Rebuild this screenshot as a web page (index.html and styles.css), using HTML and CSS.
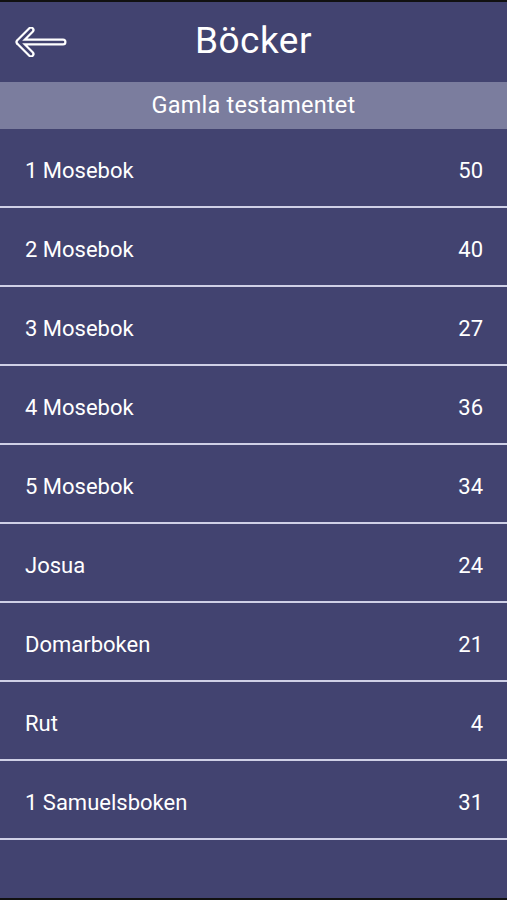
FILE: index.html
```html
<!DOCTYPE html>
<html lang="sv">
<head>
    <meta charset="UTF-8">
    <title>Böcker</title>
    <link rel="stylesheet" href="styles.css">
</head>
<body>
    <div class="app">
        <div class="topbar">
            <button class="back" aria-label="Tillbaka">
                <svg width="52" height="30" viewBox="0 0 52 30">
                    <path d="M16 3 L4 15 L16 27 M4 15 L48 15" fill="none" stroke="#ffffff" stroke-width="7" stroke-linecap="round" stroke-linejoin="round"/>
                    <path d="M16 3 L4 15 L16 27 M4 15 L48 15" fill="none" stroke="#424370" stroke-width="2.6" stroke-linecap="round" stroke-linejoin="round"/>
                </svg>
            </button>
            <h1>Böcker</h1>
        </div>
        <div class="section">Gamla testamentet</div>
        <ul class="books">
            <li><span>1 Mosebok</span><span>50</span></li>
            <li><span>2 Mosebok</span><span>40</span></li>
            <li><span>3 Mosebok</span><span>27</span></li>
            <li><span>4 Mosebok</span><span>36</span></li>
            <li><span>5 Mosebok</span><span>34</span></li>
            <li><span>Josua</span><span>24</span></li>
            <li><span>Domarboken</span><span>21</span></li>
            <li><span>Rut</span><span>4</span></li>
            <li><span>1 Samuelsboken</span><span>31</span></li>
        </ul>
    </div>
</body>
</html>
```

FILE: styles.css
```css
body {
    margin: 0;
    background-color: #111;
    font-family: Roboto, "Liberation Sans", sans-serif;
    color: #ffffff;
}

.app {
    margin-top: 2px;
    height: 896px;
    background-color: #424370;
    overflow: hidden;
}

.topbar {
    height: 80px;
    padding-bottom: 4px;
    box-sizing: border-box;
    display: flex;
    align-items: center;
    justify-content: center;
    position: relative;
}

.back {
    position: absolute;
    left: 15px;
    top: 25px;
    background: none;
    border: none;
    padding: 0;
    cursor: pointer;
}

.topbar h1 {
    margin: 0;
    font-size: 37px;
    font-weight: 400;
    letter-spacing: 0.5px;
}

.section {
    height: 47px;
    line-height: 47px;
    background-color: #7b7d9e;
    text-align: center;
    font-size: 23.5px;
    letter-spacing: 0.2px;
}

.books {
    list-style: none;
    margin: 0;
    padding: 0;
}

.books li {
    height: 77px;
    box-sizing: content-box;
    border-bottom: 2px solid #cfd0e6;
    display: flex;
    align-items: center;
    justify-content: space-between;
    padding: 0 24px 0 25px;
    font-size: 22px;
}

.books li span {
    padding-top: 6px;
}
```
